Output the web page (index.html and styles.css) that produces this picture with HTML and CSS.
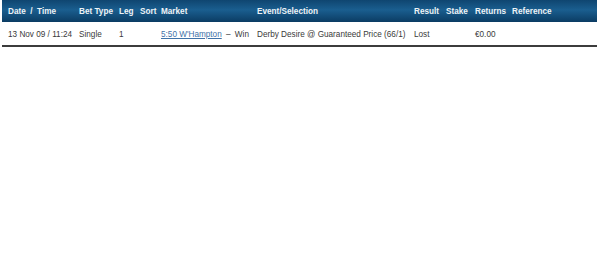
FILE: index.html
```html
<!DOCTYPE html>
<html lang="en">
<head>
    <meta charset="UTF-8">
    <title>Bet History</title>
    <link rel="stylesheet" href="styles.css">
</head>
<body>

<div class="container">
    <table class="bets">
        <colgroup>
            <col class="c-date">
            <col class="c-type">
            <col class="c-leg">
            <col class="c-sort">
            <col class="c-market">
            <col class="c-event">
            <col class="c-result">
            <col class="c-stake">
            <col class="c-returns">
            <col class="c-ref">
        </colgroup>
        <thead>
        <tr>
            <th>Date &nbsp;/ &nbsp;Time</th>
            <th>Bet Type</th>
            <th>Leg</th>
            <th>Sort</th>
            <th>Market</th>
            <th>Event/Selection</th>
            <th>Result</th>
            <th>Stake</th>
            <th>Returns</th>
            <th>Reference</th>
        </tr>
        </thead>
        <tbody>
        <tr>
            <td>13 Nov 09 / 11:24</td>
            <td>Single</td>
            <td>1</td>
            <td></td>
            <td><a href="#">5:50 W'Hampton</a> <span class="dash">&ndash;</span> Win</td>
            <td>Derby Desire @ Guaranteed Price (66/1)</td>
            <td>Lost</td>
            <td></td>
            <td>&euro;0.00</td>
            <td></td>
        </tr>
        </tbody>
    </table>
</div>

</body>
</html>
```

FILE: styles.css
```css
body {
    margin: 0;
    background-color: #fff;
    font-family: "Liberation Sans", Arial, sans-serif;
    color: #3a3a3a;
}

.container {
    padding: 0 3px 0 2px;
}

.bets {
    width: 595px;
    border-collapse: collapse;
    table-layout: fixed;
}

.c-date { width: 71px; }
.c-type { width: 40px; }
.c-leg { width: 21px; }
.c-sort { width: 21px; }
.c-market { width: 96px; }
.c-event { width: 157px; }
.c-result { width: 32px; }
.c-stake { width: 29px; }
.c-returns { width: 37px; }
.c-ref { width: 91px; }

th, td {
    text-align: left;
    padding: 0 0 0 6px;
    white-space: nowrap;
}

thead tr {
    height: 22px;
    background: linear-gradient(#0f4570, #1a5e8f 45%, #0b3c63);
}

th {
    color: #eef3f7;
    font-size: 8.2px;
    font-weight: bold;
    padding-top: 1px;
}

tbody tr {
    height: 24px;
    border-bottom: 2px solid #3c3c3c;
}

td {
    font-size: 8.2px;
    padding-top: 1px;
}

td a {
    color: #3f72a8;
    text-decoration: underline;
}

.dash {
    margin: 0 2px;
}
```
